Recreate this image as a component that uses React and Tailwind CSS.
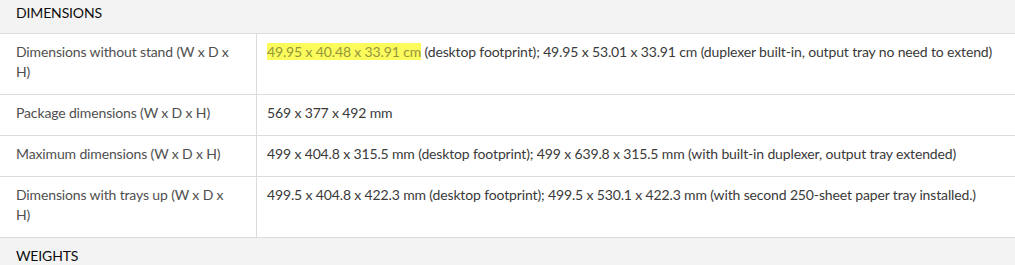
const rows = [
  {
    label: 'Dimensions without stand (W x D x H)',
    highlight: '49.95 x 40.48 x 33.91 cm',
    value:
      ' (desktop footprint); 49.95 x 53.01 x 33.91 cm (duplexer built-in, output tray no need to extend)',
  },
  { label: 'Package dimensions (W x D x H)', value: '569 x 377 x 492 mm' },
  {
    label: 'Maximum dimensions (W x D x H)',
    value:
      '499 x 404.8 x 315.5 mm (desktop footprint); 499 x 639.8 x 315.5 mm (with built-in duplexer, output tray extended)',
  },
  {
    label: 'Dimensions with trays up (W x D x H)',
    value:
      '499.5 x 404.8 x 422.3 mm (desktop footprint); 499.5 x 530.1 x 422.3 mm (with second 250-sheet paper tray installed.)',
  },
];

function SpecRow({ row }) {
  return (
    <div className="grid grid-cols-[257px_1fr] border-b border-[#dcdcdc]">
      <div className="border-r border-[#dcdcdc] pl-4 pr-4 pt-[8px] pb-[12px] text-[#4f4f4f]">
        {row.label}
      </div>
      <div className="pl-[10px] pr-0 pt-[8px] pb-[12px] text-[#3a3a3a]">
        {row.highlight && (
          <span className="bg-[#fbfb5c] text-[#96963c]">{row.highlight}</span>
        )}
        {row.value}
      </div>
    </div>
  );
}

export default function App() {
  return (
    <div
      className="w-[1015px] h-[265px] overflow-hidden bg-white text-[14px] leading-[20px] tracking-[-0.14px]"
      style={{ fontFamily: 'Lato, "Open Sans", sans-serif' }}
    >
      <div className="h-[34px] bg-[#f3f3f3] border-b border-[#dcdcdc] pl-4 pt-[3px] text-[#0d0d0d]">
        DIMENSIONS
      </div>
      {rows.map((r, i) => (
        <SpecRow key={i} row={r} />
      ))}
      <div className="h-[40px] bg-[#f3f3f3] pl-4 pt-[8px] text-[#0d0d0d]">WEIGHTS</div>
    </div>
  );
}
